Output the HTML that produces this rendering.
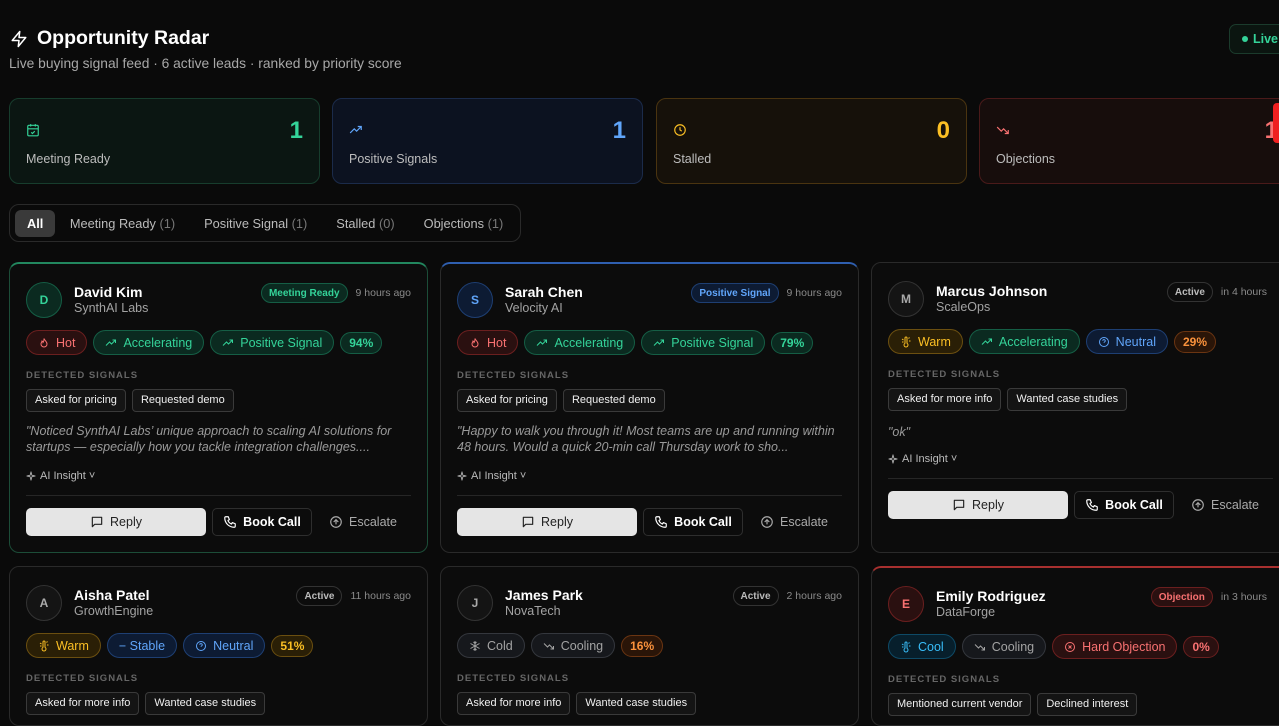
<!DOCTYPE html>
<html><head><meta charset="utf-8"><style>
*{box-sizing:border-box;margin:0;padding:0}
body{width:1279px;height:704px;overflow:hidden;background:#0a0a0a;font-family:"Liberation Sans",sans-serif;color:#e5e5e5;position:relative}
.abs{position:absolute}
svg{display:inline-block;vertical-align:middle;flex:none}
.stat{position:absolute;top:98px;width:311px;height:86px;border-radius:10px;border:1px solid}
.stat .ic{position:absolute;left:16px;top:24px}
.stat .lb{position:absolute;left:16px;top:53px;font-size:12.5px;color:#bdbdbd}
.stat .n{position:absolute;right:16px;top:18px;font-size:24px;font-weight:700}
.card{position:absolute;width:419px;border-radius:10px;border:1px solid #2a2a2a;background:#0c0c0c;overflow:hidden}
.av{position:absolute;left:16px;top:18px;width:36px;height:36px;border-radius:50%;border:1px solid #333;background:#141414;text-align:center;line-height:34px;font-size:12px;font-weight:700;color:#aaa}
.nm{position:absolute;left:64px;top:20px;font-size:14px;font-weight:700;color:#fff}
.co{position:absolute;left:64px;top:37px;font-size:12.5px;color:#a3a3a3}
.tr{position:absolute;right:16px;top:19px;font-size:10.5px;color:#8a8a8a;display:flex;align-items:center;gap:8px}
.st{border:1px solid #333;border-radius:10px;padding:0 7px;height:20px;display:flex;align-items:center;font-weight:700;font-size:10px;color:#bbb}
.pills{position:absolute;left:16px;top:66px;display:flex;gap:6px}
.p{height:25px;border-radius:13px;border:1px solid;padding:0 11px;font-size:12.5px;display:flex;align-items:center;gap:6px;white-space:nowrap}
.pc{height:22px;margin-top:1.5px;padding:0 8px;font-weight:700;font-size:12px}
.g{color:#34d399;background:#0b2a20;border-color:#155e45}
.r{color:#f87171;background:#2a1010;border-color:#6b1f1f}
.a{color:#fbbf24;background:#2a1f06;border-color:#6b4f10}
.b{color:#60a5fa;background:#0d1b33;border-color:#1e3f73}
.o{color:#fb923c;background:#2a1508;border-color:#6b3512}
.gr{color:#a3a3a3;background:#16181c;border-color:#34373d}
.sk{color:#38bdf8;background:#071f2c;border-color:#0e4a66}
.ds{position:absolute;left:16px;top:106px;font-size:9.5px;font-weight:700;letter-spacing:1px;color:#666}
.chips{position:absolute;left:16px;top:125px;display:flex;gap:6px}
.ch{border:1px solid #3a3a3a;background:#141414;border-radius:4px;height:23px;line-height:21px;padding:0 8px;font-size:11px;color:#f0f0f0}
.q{position:absolute;left:16px;top:159px;width:385px;font-size:12.5px;font-style:italic;color:#9a9a9a;line-height:16px}
.ai{position:absolute;left:16px;font-size:11px;color:#bbb;display:flex;align-items:center;gap:4px}
.hr{position:absolute;left:16px;right:16px;height:1px;background:#262626}
.btns{position:absolute;left:16px;display:flex;gap:6px;align-items:center}
.bt{height:28px;border-radius:5px;font-size:12.5px;display:flex;align-items:center;justify-content:center;gap:6px}
.rp{width:180px;background:#e5e5e5;color:#222}
.bk{width:100px;border:1px solid #2e2e2e;color:#fff;font-weight:700;background:#0c0c0c}
.es{width:90px;color:#aaa}
.fb{position:absolute;left:9px;top:204px;width:512px;height:38px;border:1px solid #2a2a2a;border-radius:10px;display:flex;align-items:center;padding-left:5px;font-size:12.8px;color:#bbb}
.fb span{padding:0 14.5px}
.fb i{font-style:normal;color:#777}
</style></head><body>
<svg width="0" height="0" style="position:absolute"><defs>
<symbol id="up" viewBox="0 0 24 24"><path d="M2 17l7-7 4 4 8-8M15 6h6v6" fill="none" stroke="currentColor" stroke-width="2"/></symbol>
<symbol id="dn" viewBox="0 0 24 24"><path d="M2 7l7 7 4-4 8 8M15 18h6v-6" fill="none" stroke="currentColor" stroke-width="2"/></symbol>
<symbol id="fl" viewBox="0 0 24 24"><path d="M12 3c1 4 6 6 6 11a6 6 0 0 1-12 0c0-3 2-4 2-6 2 1 2 3 2 3 2-2 2-5 2-8z" fill="none" stroke="currentColor" stroke-width="2"/></symbol>
<symbol id="th" viewBox="0 0 24 24"><path d="M14 14.5V4a2 2 0 0 0-4 0v10.5a4 4 0 1 0 4 0zM4 6l3 2M4 12h3M17 5l2-2M18 10h3" fill="none" stroke="currentColor" stroke-width="2"/></symbol>
<symbol id="qu" viewBox="0 0 24 24"><circle cx="12" cy="12" r="9" fill="none" stroke="currentColor" stroke-width="2"/><path d="M9.5 9.5a2.5 2.5 0 0 1 5 .5c0 1.5-2.5 2-2.5 3.5M12 17h.01" fill="none" stroke="currentColor" stroke-width="2"/></symbol>
<symbol id="xc" viewBox="0 0 24 24"><circle cx="12" cy="12" r="9" fill="none" stroke="currentColor" stroke-width="2"/><path d="M9 9l6 6M15 9l-6 6" stroke="currentColor" stroke-width="2"/></symbol>
<symbol id="sn" viewBox="0 0 24 24"><path d="M12 2v20M3 7l18 10M21 7L3 17M9 4l3 3 3-3M9 20l3-3 3 3" fill="none" stroke="currentColor" stroke-width="2"/></symbol>
<symbol id="msg" viewBox="0 0 24 24"><path d="M4 4h16v12H8l-4 4z" fill="none" stroke="currentColor" stroke-width="2" stroke-linejoin="round"/></symbol>
<symbol id="ph" viewBox="0 0 24 24"><path d="M5 3h4l2 5-2.5 1.5a11 11 0 0 0 6 6L16 13l5 2v4a2 2 0 0 1-2 2A16 16 0 0 1 3 5a2 2 0 0 1 2-2z" fill="none" stroke="currentColor" stroke-width="2" stroke-linejoin="round"/></symbol>
<symbol id="ar" viewBox="0 0 24 24"><circle cx="12" cy="12" r="9" fill="none" stroke="currentColor" stroke-width="2"/><path d="M12 16V8M8 12l4-4 4 4" fill="none" stroke="currentColor" stroke-width="2"/></symbol>
<symbol id="sp" viewBox="0 0 24 24"><path d="M12 2l2 8 8 2-8 2-2 8-2-8-8-2 8-2z" fill="none" stroke="currentColor" stroke-width="2" stroke-linejoin="round"/></symbol>
</defs></svg>

<div class="abs" style="left:10px;top:27px;display:flex;align-items:center;gap:9px">
<svg width="18" height="20" viewBox="0 0 24 24" fill="none" stroke="#fff" stroke-width="2" stroke-linejoin="round"><path d="M13 2L3 14h9l-1 8 10-12h-9l1-8z"/></svg>
<span style="font-size:19.5px;font-weight:700;color:#fff">Opportunity Radar</span></div>
<div class="abs" style="left:9px;top:56px;font-size:13.8px;color:#a8a8a8">Live buying signal feed · 6 active leads · ranked by priority score</div>
<div class="abs" style="left:1229px;top:24px;width:70px;height:30px;border:1px solid #1b3b2c;border-radius:7px;background:#0b1510;color:#34d399;font-size:12.5px;font-weight:700;line-height:28px;padding-left:12px"><span style="display:inline-block;width:6px;height:6px;border-radius:50%;background:#34d399;vertical-align:middle;margin-right:5px;margin-top:-2px"></span>Live</div>

<div class="stat" style="left:9px;background:#0b1612;border-color:#173d2d">
<svg class="ic" width="14" height="14" viewBox="0 0 24 24" fill="none" stroke="#34d399" stroke-width="2"><rect x="3" y="4" width="18" height="18" rx="2"/><path d="M16 2v4M8 2v4M3 10h18M9 16l2 2 4-4"/></svg>
<div class="lb">Meeting Ready</div><div class="n" style="color:#34d399">1</div></div>
<div class="stat" style="left:332px;background:#0c1220;border-color:#1b2b4a">
<svg class="ic" width="14" height="14" style="color:#60a5fa"><use href="#up"/></svg>
<div class="lb">Positive Signals</div><div class="n" style="color:#60a5fa">1</div></div>
<div class="stat" style="left:656px;background:#16110a;border-color:#4a3410">
<svg class="ic" width="14" height="14" viewBox="0 0 24 24" fill="none" stroke="#fbbf24" stroke-width="2"><circle cx="12" cy="12" r="9"/><path d="M12 7v5l3 2"/></svg>
<div class="lb">Stalled</div><div class="n" style="color:#fbbf24">0</div></div>
<div class="stat" style="left:979px;background:#170d0c;border-color:#4a1a1a">
<svg class="ic" width="14" height="14" style="color:#f87171"><use href="#dn"/></svg>
<div class="lb">Objections</div><div class="n" style="color:#f87171;right:11px">1</div></div>
<div class="abs" style="left:1273px;top:103px;width:10px;height:40px;background:#ef2020;border-radius:4px"></div>

<div class="fb"><span style="background:#3a3a3a;color:#fff;font-weight:700;border-radius:6px;height:27px;line-height:27px;padding:0 12px;margin-right:0">All</span><span>Meeting Ready <i>(1)</i></span><span>Positive Signal <i>(1)</i></span><span>Stalled <i>(0)</i></span><span>Objections <i>(1)</i></span></div>

<!-- Card 1 -->
<div class="card" style="left:9px;top:262px;height:291px;border-color:#1c4d38;border-top:2px solid #22885f">
<div class="av" style="background:#0b2a20;border-color:#155e45;color:#34d399">D</div>
<div class="nm">David Kim</div><div class="co">SynthAI Labs</div>
<div class="tr"><span class="st" style="color:#34d399;background:#0b2a20;border-color:#155e45">Meeting Ready</span>9 hours ago</div>
<div class="pills"><span class="p r"><svg width="12" height="12"><use href="#fl"/></svg>Hot</span><span class="p g"><svg width="12" height="12"><use href="#up"/></svg>Accelerating</span><span class="p g"><svg width="12" height="12"><use href="#up"/></svg>Positive Signal</span><span class="p pc g">94%</span></div>
<div class="ds">DETECTED SIGNALS</div>
<div class="chips"><span class="ch">Asked for pricing</span><span class="ch">Requested demo</span></div>
<div class="q">"Noticed SynthAI Labs’ unique approach to scaling AI solutions for startups — especially how you tackle integration challenges....</div>
<div class="ai" style="top:206px"><svg width="10" height="10"><use href="#sp"/></svg>AI Insight ˅</div>
<div class="hr" style="top:231px"></div>
<div class="btns" style="top:244px"><div class="bt rp"><svg width="14" height="14"><use href="#msg"/></svg>Reply</div><div class="bt bk"><svg width="14" height="14"><use href="#ph"/></svg>Book Call</div><div class="bt es"><svg width="14" height="14"><use href="#ar"/></svg>Escalate</div></div>
</div>

<!-- Card 2 -->
<div class="card" style="left:440px;top:262px;height:291px;border-top:2px solid #2f5fb0">
<div class="av" style="background:#0d1b33;border-color:#1e3f73;color:#60a5fa">S</div>
<div class="nm">Sarah Chen</div><div class="co">Velocity AI</div>
<div class="tr"><span class="st" style="color:#60a5fa;background:#0d1b33;border-color:#1e3f73">Positive Signal</span>9 hours ago</div>
<div class="pills"><span class="p r"><svg width="12" height="12"><use href="#fl"/></svg>Hot</span><span class="p g"><svg width="12" height="12"><use href="#up"/></svg>Accelerating</span><span class="p g"><svg width="12" height="12"><use href="#up"/></svg>Positive Signal</span><span class="p pc g">79%</span></div>
<div class="ds">DETECTED SIGNALS</div>
<div class="chips"><span class="ch">Asked for pricing</span><span class="ch">Requested demo</span></div>
<div class="q">"Happy to walk you through it! Most teams are up and running within 48 hours. Would a quick 20-min call Thursday work to sho...</div>
<div class="ai" style="top:206px"><svg width="10" height="10"><use href="#sp"/></svg>AI Insight ˅</div>
<div class="hr" style="top:231px"></div>
<div class="btns" style="top:244px"><div class="bt rp"><svg width="14" height="14"><use href="#msg"/></svg>Reply</div><div class="bt bk"><svg width="14" height="14"><use href="#ph"/></svg>Book Call</div><div class="bt es"><svg width="14" height="14"><use href="#ar"/></svg>Escalate</div></div>
</div>

<!-- Card 3 -->
<div class="card" style="left:871px;top:262px;height:291px">
<div class="av">M</div>
<div class="nm">Marcus Johnson</div><div class="co">ScaleOps</div>
<div class="tr" style="right:22px"><span class="st">Active</span>in 4 hours</div>
<div class="pills"><span class="p a"><svg width="12" height="12"><use href="#th"/></svg>Warm</span><span class="p g"><svg width="12" height="12"><use href="#up"/></svg>Accelerating</span><span class="p b"><svg width="12" height="12"><use href="#qu"/></svg>Neutral</span><span class="p pc o">29%</span></div>
<div class="ds">DETECTED SIGNALS</div>
<div class="chips"><span class="ch">Asked for more info</span><span class="ch">Wanted case studies</span></div>
<div class="q" style="top:161px">"ok"</div>
<div class="ai" style="top:190px"><svg width="10" height="10"><use href="#sp"/></svg>AI Insight ˅</div>
<div class="hr" style="top:215px"></div>
<div class="btns" style="top:228px"><div class="bt rp"><svg width="14" height="14"><use href="#msg"/></svg>Reply</div><div class="bt bk"><svg width="14" height="14"><use href="#ph"/></svg>Book Call</div><div class="bt es"><svg width="14" height="14"><use href="#ar"/></svg>Escalate</div></div>
</div>

<!-- Row 2 -->
<div class="card" style="left:9px;top:566px;height:160px">
<div class="av">A</div>
<div class="nm">Aisha Patel</div><div class="co">GrowthEngine</div>
<div class="tr"><span class="st">Active</span>11 hours ago</div>
<div class="pills"><span class="p a"><svg width="12" height="12"><use href="#th"/></svg>Warm</span><span class="p b">− Stable</span><span class="p b"><svg width="12" height="12"><use href="#qu"/></svg>Neutral</span><span class="p pc a">51%</span></div>
<div class="ds">DETECTED SIGNALS</div>
<div class="chips"><span class="ch">Asked for more info</span><span class="ch">Wanted case studies</span></div>
</div>
<div class="card" style="left:440px;top:566px;height:160px">
<div class="av">J</div>
<div class="nm">James Park</div><div class="co">NovaTech</div>
<div class="tr"><span class="st">Active</span>2 hours ago</div>
<div class="pills"><span class="p gr"><svg width="12" height="12"><use href="#sn"/></svg>Cold</span><span class="p gr"><svg width="12" height="12"><use href="#dn"/></svg>Cooling</span><span class="p pc o">16%</span></div>
<div class="ds">DETECTED SIGNALS</div>
<div class="chips"><span class="ch">Asked for more info</span><span class="ch">Wanted case studies</span></div>
</div>
<div class="card" style="left:871px;top:566px;height:160px;border-top:2px solid #a8302f">
<div class="av" style="background:#2a1010;border-color:#6b1f1f;color:#f87171">E</div>
<div class="nm">Emily Rodriguez</div><div class="co">DataForge</div>
<div class="tr" style="right:22px"><span class="st" style="color:#f87171;background:#2a1010;border-color:#6b1f1f">Objection</span>in 3 hours</div>
<div class="pills"><span class="p sk"><svg width="12" height="12"><use href="#th"/></svg>Cool</span><span class="p gr"><svg width="12" height="12"><use href="#dn"/></svg>Cooling</span><span class="p r"><svg width="12" height="12"><use href="#xc"/></svg>Hard Objection</span><span class="p pc r">0%</span></div>
<div class="ds">DETECTED SIGNALS</div>
<div class="chips"><span class="ch">Mentioned current vendor</span><span class="ch">Declined interest</span></div>
</div>
</body></html>
